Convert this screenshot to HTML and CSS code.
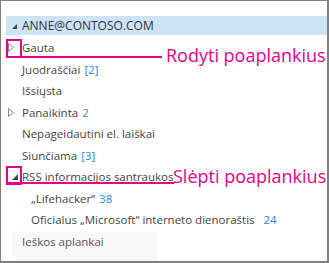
FILE: index.html
```html
<!DOCTYPE html>
<html lang="lt">
<head>
  <meta charset="UTF-8">
  <title>Aplankai</title>
  <link rel="stylesheet" href="styles.css">
</head>
<body>

  <div class="pane">
    <div class="account">
      <svg class="tri" width="5" height="5" viewBox="0 0 5 5"><polygon points="5,0 5,5 0,5" fill="#444"/></svg>
      <span>ANNE@CONTOSO.COM</span>
    </div>

    <ul class="folders">
      <li class="folder">
        <span class="toggle"><svg width="6" height="9" viewBox="0 0 6 9"><polygon points="0.5,0.5 5.5,4.5 0.5,8.5" fill="none" stroke="#888"/></svg></span>
        <span class="name">Gauta</span>
      </li>
      <li class="folder"><span class="toggle"></span><span class="name">Juodraščiai</span><span class="count">[2]</span></li>
      <li class="folder"><span class="toggle"></span><span class="name">Išsiųsta</span></li>
      <li class="folder">
        <span class="toggle"><svg width="6" height="9" viewBox="0 0 6 9"><polygon points="0.5,0.5 5.5,4.5 0.5,8.5" fill="none" stroke="#888"/></svg></span>
        <span class="name">Panaikinta</span><span class="count">2</span>
      </li>
      <li class="folder"><span class="toggle"></span><span class="name">Nepageidautini el. laiškai</span></li>
      <li class="folder"><span class="toggle"></span><span class="name">Siunčiama</span><span class="count">[3]</span></li>
      <li class="folder">
        <span class="toggle open"><svg width="6" height="6" viewBox="0 0 6 6"><polygon points="6,0 6,6 0,6" fill="#444"/></svg></span>
        <span class="name">RSS informacijos santraukos</span>
      </li>
      <li class="folder sub"><span class="name">„Lifehacker“</span><span class="count">38</span></li>
      <li class="folder sub"><span class="name">Oficialus „Microsoft“ interneto dienoraštis</span><span class="count wide">24</span></li>
    </ul>

    <div class="search">Ieškos aplankai</div>
  </div>

  <!-- paaiškinimai virš sąrašo -->
  <div class="mark box-show"></div>
  <div class="mark line-show"></div>
  <div class="label label-show">Rodyti poaplankius</div>

  <div class="mark box-hide"></div>
  <div class="mark line-hide"></div>
  <div class="label label-hide">Slėpti poaplankius</div>

</body>
</html>
```

FILE: styles.css
```css
body {
  margin: 0;
  font-family: "Open Sans", "Noto Sans", sans-serif;
  background-color: #ffffff;
}

.pane {
  width: 329px;
  height: 263px;
  box-sizing: border-box;
  border-style: solid;
  border-color: #7f7f7f;
  border-width: 1px 2px 2px 1px;
  padding: 15px 0 0 5px;
  overflow: hidden;
}

.account {
  height: 19px;
  display: flex;
  align-items: center;
  gap: 5px;
  padding-left: 6px;
  background-color: #cde4f7;
  color: #333333;
  font-size: 12px;
}

.account .tri {
  margin-top: 1px;
}

.folders {
  list-style: none;
  margin: 2px 0 0 0;
  padding: 0;
}

.folder {
  height: 21.5px;
  display: flex;
  align-items: center;
  padding-left: 2px;
  color: #444444;
  font-size: 11.5px;
  white-space: nowrap;
}

.toggle {
  width: 14px;
  height: 9px;
  display: flex;
  align-items: center;
  flex-shrink: 0;
}

.toggle.open {
  padding-left: 4px;
  width: 10px;
  height: 6px;
}

.folder.sub {
  padding-left: 25px;
}

.count {
  margin-left: 4px;
  color: #2b88d8;
}

.count.wide {
  margin-left: 9px;
}

.search {
  height: 29px;
  margin-left: 6px;
  margin-right: 170px;
  padding: 1px 0 0 10px;
  box-sizing: border-box;
  line-height: 20px;
  font-size: 11.5px;
  color: #555555;
  background-color: #f8f8f8;
}

/* rožiniai paaiškinimai */
.mark {
  position: absolute;
  background-color: #e3008c;
}

.box-show,
.box-hide {
  background-color: transparent;
  border: 2px solid #e3008c;
  width: 12px;
  height: 15px;
  left: 6px;
}

.box-show {
  top: 39px;
}

.box-hide {
  top: 166px;
}

.line-show {
  left: 6px;
  top: 56px;
  width: 156px;
  height: 2px;
}

.line-hide {
  left: 6px;
  top: 182px;
  width: 168px;
  height: 2px;
}

.label {
  position: absolute;
  color: #e3008c;
  font-size: 18px;
  line-height: 18px;
  white-space: nowrap;
}

.label-show {
  left: 166px;
  top: 46px;
}

.label-hide {
  left: 173px;
  top: 167px;
}
```
